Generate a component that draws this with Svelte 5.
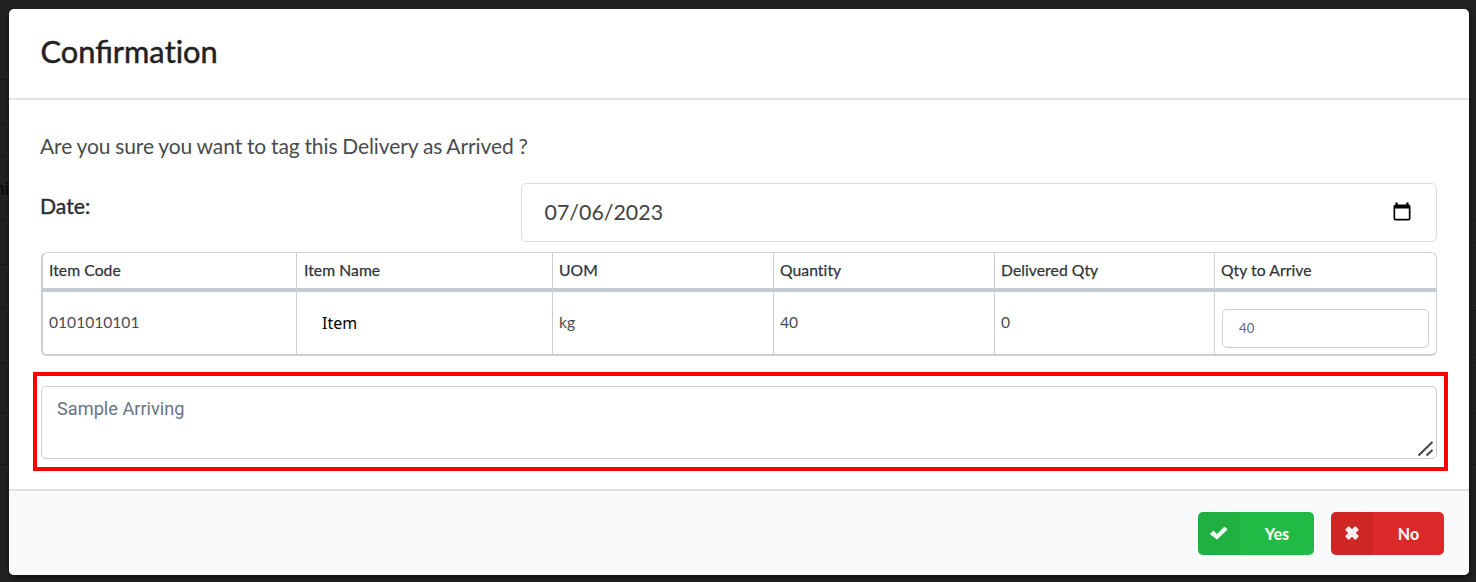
<script>
  const columns = ['Item Code', 'Item Name', 'UOM', 'Quantity', 'Delivered Qty', 'Qty to Arrive'];
  const linesLeft = [79, 123, 155, 220, 264, 308, 362, 413, 464];
  const linesRight = [220, 242, 310, 354, 362, 413, 464];
</script>

<div class="page">
  {#each linesLeft as y}<i class="rule left" style="top:{y}px"></i>{/each}
  {#each linesRight as y}<i class="rule right" style="top:{y}px"></i>{/each}
  <span class="behind">ni</span>
  <section class="modal">
    <header><h1>Confirma<span class="plain">tion</span></h1></header>
    <main>
      <p class="question">Are you sure you want to tag this Delivery as Arrived ?</p>
      <div class="date-row">
        <span class="label">Date:</span>
        <div class="date">
          <span>07/06/2023</span>
          <svg width="18" height="20" viewBox="0 0 18 20">
            <path fill="#000" fill-rule="evenodd" d="M2.5 .5h2.2v2h8.6v-2h2.2v2Q17.5 2.5 17.5 4.5v12q0 2-2 2h-13q-2 0-2-2v-12q0-2 2-2zM2.2 6.5v10.3h13.6V6.5z" />
          </svg>
        </div>
      </div>
      <div class="table">
        {#each columns as c}<div class="cell head">{c}</div>{/each}
        <div class="cell">0101010101</div>
        <div class="cell name">Item</div>
        <div class="cell">kg</div>
        <div class="cell">40</div>
        <div class="cell">0</div>
        <div class="cell entry"><div class="qty">40</div></div>
      </div>
      <div class="highlight">
        <div class="note">
          <span>Sample Arriving</span>
          <svg class="grip" width="17" height="16" viewBox="0 0 17 16">
            <path d="M1.5 14.5L15.5 1M9.5 14.5L15.5 9" stroke="#484848" stroke-width="2.1" fill="none" />
          </svg>
        </div>
      </div>
    </main>
    <footer>
      <div class="btn yes">
        <div class="icon">
          <svg width="18" height="14" viewBox="0 0 18 14"><path fill="#fff" fill-opacity=".95" d="M.3 7.6L3 4.9q.5-.4 1 0l3 3L14 .9q.5-.4 1 0l2.1 2.1q.5.5 0 1L7.5 13.3q-.5.4-1 0L.3 8.4q-.3-.4 0-.8z" /></svg>
        </div>
        <span>Yes</span>
      </div>
      <div class="btn no">
        <div class="icon">
          <svg width="14" height="14" viewBox="0 0 14 14"><path fill="#fff" fill-opacity=".92" d="M.5 3.3L3.2.6q.6-.5 1.1 0L7 3.2 9.7.6q.5-.5 1.1 0l2.7 2.7q.4.5 0 1L10.8 7l2.7 2.7q.4.5 0 1l-2.7 2.7q-.6.5-1.1 0L7 10.8l-2.7 2.6q-.5.5-1.1 0L.5 10.7q-.4-.5 0-1L3.2 7 .5 4.3q-.4-.5 0-1z" /></svg>
        </div>
        <span>No</span>
      </div>
    </footer>
  </section>
</div>

<style>
  :global(body) { background: #212121; overflow: hidden; }
  .page, .page * { box-sizing: border-box; }
  .page {
    position: relative;
    width: 1476px;
    height: 582px;
    padding: 8.5px 7px 7px 9px;
    background: #212121;
    font-family: Lato, sans-serif;
    color: #404448;
  }
  .rule { position: absolute; height: 1px; background: #191919; }
  .left { left: 0; width: 9px; }
  .right { right: 0; width: 7px; }
  .behind { position: absolute; left: -6px; top: 176px; font-size: 19px; line-height: 24px; color: #050508; }
  .modal {
    position: relative;
    height: 566px;
    display: flex;
    flex-direction: column;
    border-radius: 5px;
    overflow: hidden;
    background: #fff;
    box-shadow: 1px 3px 5px rgba(0, 0, 0, .5);
  }
  header { height: 91px; flex: none; padding: 22.5px 31.5px 0; border-bottom: 2px solid #e3e4e5; }
  h1 { margin: 0; font-size: 30.8px; line-height: 42px; font-weight: 400; color: #222; -webkit-text-stroke: .5px #222; }
  .plain { font-variant-ligatures: none; }
  main { flex: 1; padding: 32px 24px 0; }
  .question { margin: 0 0 0 7px; height: 51px; font-size: 21px; line-height: 28px; letter-spacing: -.08px; word-spacing: -.5px; white-space: nowrap; color: #484b4e; }
  .date-row { display: flex; height: 69px; margin-left: 7px; }
  .label { width: 481px; padding-top: 9px; font-size: 21.2px; line-height: 28px; color: #2c2e30; -webkit-text-stroke: .4px #2c2e30; }
  .date {
    width: 916px; height: 59px; padding: 0 25px 0 22.5px;
    border: 1px solid #dcdddf; border-radius: 5px;
    display: flex; align-items: center; justify-content: space-between;
    font-size: 21.4px; line-height: 26px; color: #424242;
  }
  .table {
    width: 1396px; height: 104px; margin: 0 0 1px 8px;
    display: grid;
    grid-template-columns: 253px 256px 221px 221px 220px 1fr;
    grid-template-rows: 39px 1fr;
    border: 1px solid #d0d4d8;
    border-left: 2px solid #c9ced4;
    border-bottom: 2px solid #c9ced4;
    border-radius: 6px;
    overflow: hidden;
  }
  .cell { padding: 0 0 2px 6px; border-left: 1px solid #c9ced4; display: flex; align-items: center; font-size: 15.6px; color: #484c50; }
  .cell:nth-child(6n + 1) { border-left: 0; }
  .cell:nth-child(6n + 2) { padding-left: 7px; }
  .cell.head { border-bottom: 4px solid #c6cbd2; padding-bottom: 0; font-size: 15.7px; letter-spacing: .06px; color: #303438; -webkit-text-stroke: .25px #303438; }
  .cell.name { padding: 0 0 0 25px; font-family: "Noto Sans", sans-serif; font-size: 16px; color: #000; }
  .cell.entry { padding: 11px 7px 0; }
  .qty { width: 100%; height: 39px; padding-left: 16px; border: 1px solid #c9cfd5; border-radius: 5px; font-size: 13.2px; line-height: 36px; color: #5e6a78; }
  .highlight { width: 1415px; height: 99px; margin-top: 16px; padding: 10px 7px 0 4px; border: 4px solid #f00; }
  .note { position: relative; height: 73px; width: 1396px; padding: 10px 0 0 15px; border: 1px solid #c6cdd3; border-radius: 5px; font-family: Roboto, sans-serif; font-size: 18.2px; line-height: 24px; color: #687580; }
  .grip { position: absolute; right: 2px; bottom: 1px; }
  footer { height: 86px; flex: none; padding: 21px 25px 0 0; display: flex; justify-content: flex-end; gap: 17px; border-top: 2px solid #e1e2e3; background: #f9fafc; }
  .btn { height: 43px; display: flex; align-items: center; border-radius: 5px; overflow: hidden; font-size: 16px; font-weight: 900; color: #fffffff2; }
  .btn span { flex: 1; text-align: center; }
  .icon { width: 42px; height: 100%; display: flex; align-items: center; justify-content: center; background: rgba(0, 0, 0, .05); }
  .yes { width: 116px; background: #21ba45; }
  .no { width: 113px; background: #db2828; }
</style>
